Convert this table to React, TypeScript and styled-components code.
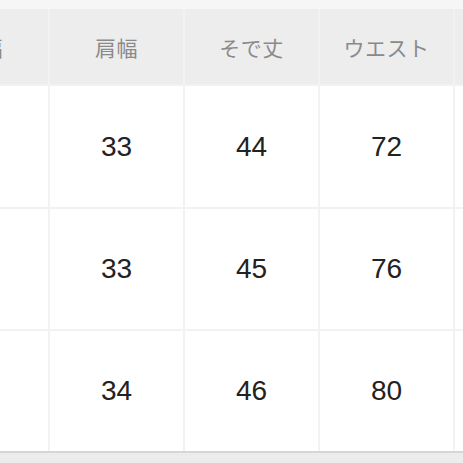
import React from 'react';
import styled, { createGlobalStyle } from 'styled-components';

const GlobalStyle = createGlobalStyle`
  html, body {
    margin: 0;
    padding: 0;
    background: #f6f6f6;
    overflow: hidden;
  }
`;

const Page = styled.div`
  width: 463px;
  height: 463px;
  overflow: hidden;
  padding-top: 9px;
  box-sizing: border-box;
  background: #f6f6f6;
`;

const SizeTable = styled.div`
  display: grid;
  grid-template-columns: repeat(5, 133px);
  grid-auto-rows: 120px;
  grid-template-rows: 75px 121px;
  gap: 2px;
  margin-left: -85px;
  width: max-content;
  background: #f2f2f2;
  border-bottom: 2px solid #d6d6d6;
`;

const HeadCell = styled.div`
  display: flex;
  align-items: center;
  justify-content: center;
  background: #ededed;
  color: #8a8a8a;
  font-family: "Noto Sans CJK JP", "Noto Sans", sans-serif;
  font-size: 21px;
  letter-spacing: 0.5px;
`;

const Cell = styled.div`
  display: flex;
  align-items: center;
  justify-content: center;
  background: #ffffff;
  color: #222222;
  font-family: "Liberation Sans", Arial, sans-serif;
  font-size: 28px;
`;

const Footer = styled.div`
  height: 20px;
  background: #ececec;
`;

const headers = ['身幅', '肩幅', 'そで丈', 'ウエスト', ''];

const rows = [
  ['48', '33', '44', '72', ''],
  ['50', '33', '45', '76', ''],
  ['52', '34', '46', '80', ''],
];

const App: React.FC = () => {
  return (
    <>
      <GlobalStyle />
      <Page>
        <SizeTable>
          {headers.map((h, j) => (
            <HeadCell key={`h-${j}`}>{h}</HeadCell>
          ))}
          {rows.map((row, i) =>
            row.map((v, j) => <Cell key={`${i}-${j}`}>{v}</Cell>)
          )}
        </SizeTable>
        <Footer />
      </Page>
    </>
  );
};

export default App;
